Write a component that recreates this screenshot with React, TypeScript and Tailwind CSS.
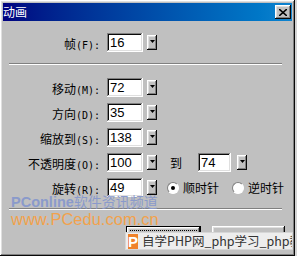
import React from "react";

const raised =
  "shadow-[inset_-1px_-1px_#0a0a0a,inset_1px_1px_#ffffff,inset_-2px_-2px_#808080,inset_2px_2px_#dfdfdf]";
const sunken =
  "shadow-[inset_-1px_-1px_#ffffff,inset_1px_1px_#808080,inset_-2px_-2px_#dfdfdf,inset_2px_2px_#0a0a0a]";

function Label({ cjk, k }: { cjk: string; k: string }) {
  return (
    <span className="whitespace-nowrap">
      <span className="font-['Noto_Sans_CJK_SC',sans-serif] text-[12px]">{cjk}</span>
      <span className="font-['DejaVu_Sans_Mono',monospace] text-[10px]">({k}):</span>
    </span>
  );
}

function Field({ value, w = 36 }: { value: string; w?: number }) {
  return (
    <div
      className={`${sunken} bg-white h-[19px] flex items-center pl-[3px] font-['Liberation_Sans',sans-serif] text-[13px] text-black leading-none`}
      style={{ width: w }}
    >
      {value}
    </div>
  );
}

function Drop({ className = "" }: { className?: string }) {
  return (
    <div className={`${raised} bg-[#c0c0c0] w-[10px] h-[15px] flex items-start justify-center pt-[5px] ${className}`}>
      <svg width="5" height="3" viewBox="0 0 5 3">
        <path d="M0 0H5L2.5 3Z" fill="#000" />
      </svg>
    </div>
  );
}

function Row({
  label,
  k,
  value,
  children,
  className = "",
}: {
  label: string;
  k: string;
  value: string;
  children?: React.ReactNode;
  className?: string;
}) {
  return (
    <div className={`flex items-center h-[19px] ${className}`}>
      <div className="w-[97px] text-right text-black leading-none">
        <Label cjk={label} k={k} />
      </div>
      <div className="ml-[7px]">
        <Field value={value} />
      </div>
      <Drop className="ml-[4px]" />
      {children}
    </div>
  );
}

function Radio({ checked }: { checked?: boolean }) {
  return (
    <div className="w-[12px] h-[12px] rounded-full bg-white border border-t-[#808080] border-l-[#808080] border-b-[#ffffff] border-r-[#ffffff] flex items-center justify-center">
      {checked && <div className="w-[4px] h-[4px] rounded-full bg-black" />}
    </div>
  );
}

function Sep({ className = "" }: { className?: string }) {
  return (
    <div className={`ml-[6px] w-[273px] ${className}`}>
      <div className="h-px bg-[#808080]" />
      <div className="h-px bg-white" />
    </div>
  );
}

export default function App() {
  return (
    <div className="w-[297px] h-[256px] bg-[#d4d4d4] overflow-hidden relative">
      <div className={`w-[295px] h-[256px] p-[3px] bg-[#c0c0c0] ${raised} flex flex-col`}>
        {/* Title bar */}
        <div className="h-[18px] bg-gradient-to-r from-[#000080] to-[#1084d0] flex items-center justify-between pr-[1px]">
          <span className="text-white font-['Noto_Sans_CJK_SC',sans-serif] text-[12px] leading-none">动画</span>
          <div className={`${raised} bg-[#c0c0c0] w-[16px] h-[14px] flex items-center justify-center`}>
            <svg width="8" height="7" viewBox="0 0 8 7">
              <path d="M0 0L8 7M8 0L0 7" stroke="#000" strokeWidth="1.6" />
            </svg>
          </div>
        </div>

        <Row label="帧" k="F" value="16" className="mt-[12px]" />
        <Sep className="mt-[11px]" />

        <div className="flex flex-col gap-[6px] mt-[13px]">
          <Row label="移动" k="M" value="72" />
          <Row label="方向" k="D" value="35" />
          <Row label="缩放到" k="S" value="138" />
          <Row label="不透明度" k="O" value="100">
            <span className="ml-[13px] w-[12px] font-['Noto_Sans_CJK_SC',sans-serif] text-[12px] leading-none text-black">到</span>
            <div className="ml-[16px]">
              <Field value="74" w={33} />
            </div>
            <Drop className="ml-[6px]" />
          </Row>
          <Row label="旋转" k="R" value="49">
            <div className="ml-[10px]">
              <Radio checked />
            </div>
            <span className="ml-[4px] font-['Noto_Sans_CJK_SC',sans-serif] text-[12px] leading-none text-black">顺时针</span>
            <div className="ml-[13px]">
              <Radio />
            </div>
            <span className="ml-[4px] font-['Noto_Sans_CJK_SC',sans-serif] text-[12px] leading-none text-black">逆时针</span>
          </Row>
        </div>

        <Sep className="mt-[11px]" />

        <div className="flex mt-[16px] ml-[123px] gap-[11px]">
          <div className="w-[75px] h-[23px] border border-black">
            <div className={`${raised} bg-[#c0c0c0] w-full h-full p-[3px]`}>
              <div className="w-full h-full border border-dotted border-black flex items-center justify-center font-['Noto_Sans_CJK_SC',sans-serif] text-[12px] leading-none text-black">
                确定
              </div>
            </div>
          </div>
          <div className={`${raised} bg-[#c0c0c0] w-[73px] h-[23px] flex items-center justify-center font-['Noto_Sans_CJK_SC',sans-serif] text-[12px] leading-none text-black`}>
            取消
          </div>
        </div>
      </div>

      {/* Watermarks */}
      <div className="absolute left-[11px] top-[194px] flex items-baseline leading-none text-[#8a9acb]">
        <span className="font-['Liberation_Sans',sans-serif] font-bold text-[14.5px]">PConline</span>
        <span className="font-['Noto_Sans_CJK_SC',sans-serif] text-[14px]">软件资讯频道</span>
      </div>
      <div className="absolute left-[11px] top-[211px] leading-none font-['Liberation_Sans',sans-serif] text-[16.5px] text-[#f2a24c]">
        www.PCedu.com.cn
      </div>

      {/* Banner overlay */}
      <div className="absolute left-[125px] top-[232px] w-[168px] h-[18px] bg-[#ededed] border border-[#d6d6d6] flex items-center overflow-hidden">
        <div className="ml-[2px] w-[15px] h-[15px] bg-[#f0832a] flex items-center justify-center">
          <span className="text-white font-['Liberation_Sans',sans-serif] font-bold text-[15px] leading-none">P</span>
        </div>
        <span className="ml-[4px] whitespace-nowrap font-['Noto_Sans_CJK_SC',sans-serif] text-[12.5px] leading-none text-[#333333]">
          自学PHP网_php学习_php教程
        </span>
      </div>
    </div>
  );
}
